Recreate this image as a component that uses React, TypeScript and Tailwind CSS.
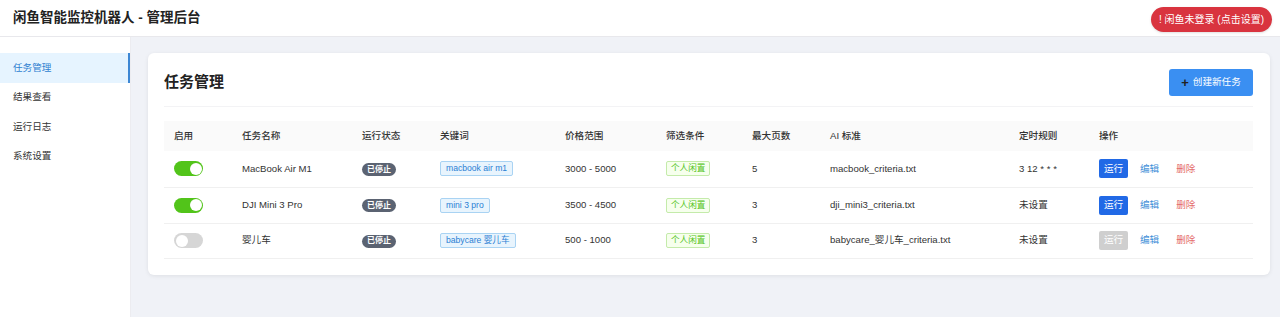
import React from "react";

const font = { fontFamily: '"Liberation Sans", "Noto Sans CJK SC", sans-serif' };

type Row = {
  on: boolean;
  name: string;
  kw: string;
  price: string;
  pages: string;
  ai: string;
  cron: string;
};

const rows: Row[] = [
  { on: true, name: "MacBook Air M1", kw: "macbook air m1", price: "3000 - 5000", pages: "5", ai: "macbook_criteria.txt", cron: "3 12 * * *" },
  { on: true, name: "DJI Mini 3 Pro", kw: "mini 3 pro", price: "3500 - 4500", pages: "3", ai: "dji_mini3_criteria.txt", cron: "未设置" },
  { on: false, name: "婴儿车", kw: "babycare 婴儿车", price: "500 - 1000", pages: "3", ai: "babycare_婴儿车_criteria.txt", cron: "未设置" },
];

const cols: [string, number][] = [
  ["启用", 68],
  ["任务名称", 120],
  ["运行状态", 78],
  ["关键词", 125],
  ["价格范围", 101],
  ["筛选条件", 86],
  ["最大页数", 78],
  ["AI 标准", 189],
  ["定时规则", 80],
  ["操作", 164],
];

function Toggle({ on }: { on: boolean }) {
  return (
    <div
      className={`relative w-[29px] h-[15px] rounded-full ${on ? "bg-[#52c41a]" : "bg-[#d6d6d6]"}`}
    >
      <div
        className={`absolute top-[1.5px] w-[12px] h-[12px] rounded-full bg-white ${on ? "right-[1.5px]" : "left-[1.5px]"}`}
      />
    </div>
  );
}

export default function App() {
  return (
    <div className="w-[1280px] h-[317px] bg-[#f0f2f7] flex flex-col overflow-hidden text-[#333]" style={font}>
      {/* Header */}
      <div className="h-[37px] bg-white border-b border-[#e8e8ec] flex items-center justify-between pl-[13px] pr-[8px] shrink-0">
        <div className="text-[13.5px] font-bold text-[#222]">闲鱼智能监控机器人 - 管理后台</div>
        <div className="h-[25px] mt-[2px] px-[8px] rounded-full bg-[#d9343f] text-white text-[10px] flex items-center shadow-sm">
          ! 闲鱼未登录 (点击设置)
        </div>
      </div>
      <div className="flex flex-1">
        {/* Sidebar */}
        <div className="w-[131px] bg-white border-r border-[#ececf0] pt-[16px] shrink-0">
          {["任务管理", "结果查看", "运行日志", "系统设置"].map((t, i) => (
            <div
              key={t}
              className={`h-[29.6px] flex items-center pl-[13px] text-[9.6px] ${
                i === 0
                  ? "bg-[#e6f4ff] text-[#2f7fd0] border-r-[2px] border-[#3d87d4]"
                  : "text-[#333]"
              }`}
            >
              {t}
            </div>
          ))}
        </div>
        {/* Main */}
        <div className="flex-1 pl-[17px] pr-[10px] pt-[16px]">
          <div className="bg-white rounded-[6px] shadow-[0_1px_4px_rgba(0,0,0,0.08)] pt-[16px] pl-[16px] pr-[17px] pb-[16px]">
            <div className="flex items-center justify-between pb-[10px] border-b border-[#f3f3f5]">
              <div className="text-[15px] font-bold text-[#222]">任务管理</div>
              <div className="w-[84px] h-[27px] rounded-[3px] bg-[#3a8ff2] text-white text-[9.6px] flex items-center justify-center gap-[4px]">
                <span className="text-[#222] text-[13px] font-bold leading-none">+</span>
                <span>创建新任务</span>
              </div>
            </div>
            <table className="w-[1089px] table-fixed border-collapse mt-[14px]">
              <thead>
                <tr className="h-[30px] bg-[#fafafa]">
                  {cols.map(([c, w]) => (
                    <th
                      key={c}
                      style={{ width: w }}
                      className="text-left font-medium text-[9.6px] text-[#333] pl-[10px]"
                    >
                      {c}
                    </th>
                  ))}
                </tr>
              </thead>
              <tbody>
                {rows.map((r, i) => (
                  <tr key={i} className={`${i === 2 ? "h-[35px]" : "h-[36px]"} border-b border-[#f0f0f0] text-[9.6px] text-[#333]`}>
                    <td className="pl-[10px]">
                      <Toggle on={r.on} />
                    </td>
                    <td className="pl-[10px]">{r.name}</td>
                    <td className="pl-[10px]">
                      <span className="inline-flex items-center h-[13px] px-[5px] rounded-full bg-[#5b6372] text-white text-[8px] font-bold">
                        已停止
                      </span>
                    </td>
                    <td className="pl-[10px]">
                      <span className="inline-flex items-center h-[15px] px-[5px] rounded-[2px] bg-[#e8f4fd] border border-[#a9d3f3] text-[#2b7fd4] text-[8.6px]">
                        {r.kw}
                      </span>
                    </td>
                    <td className="pl-[10px]">{r.price}</td>
                    <td className="pl-[10px]">
                      <span className="inline-flex items-center h-[15px] px-[4px] rounded-[2px] bg-[#f6ffed] border border-[#c4ebaa] text-[#52c41a] text-[8.6px]">
                        个人闲置
                      </span>
                    </td>
                    <td className="pl-[10px]">{r.pages}</td>
                    <td className="pl-[10px]">{r.ai}</td>
                    <td className="pl-[10px]">{r.cron}</td>
                    <td className="pl-[10px]">
                      <div className="flex items-center">
                        <span
                          className={`w-[29px] h-[19px] rounded-[2px] flex items-center justify-center text-white text-[9.6px] ${
                            r.on ? "bg-[#2169e6]" : "bg-[#cfcfcf]"
                          }`}
                        >
                          运行
                        </span>
                        <span className="ml-[12px] text-[#3f8fd8]">编辑</span>
                        <span className="ml-[17px] text-[#e46a6a]">删除</span>
                      </div>
                    </td>
                  </tr>
                ))}
              </tbody>
            </table>
          </div>
        </div>
      </div>
    </div>
  );
}
